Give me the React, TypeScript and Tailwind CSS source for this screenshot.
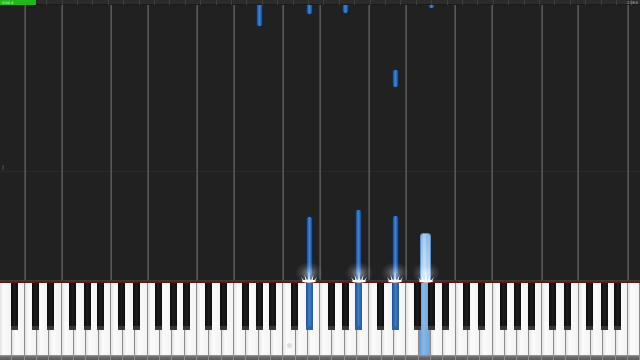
import React from "react";

const W = 640 / 52;
const LETTERS = ["A", "B", "C", "D", "E", "F", "G"];
const BLACK_OFF: Record<string, number> = { C: -1.1, D: 1.5, F: -1.1, G: 1, A: 2 };
const BK_W = 7;

const blackCenter = (whiteIdx: number) => {
  const l = LETTERS[whiteIdx % 7];
  return (whiteIdx + 1) * W + (BLACK_OFF[l] ?? 0);
};

const whiteKeys = Array.from({ length: 52 }, (_, i) => i);
const blackKeys = whiteKeys.filter((i) => i < 51 && BLACK_OFF[LETTERS[i % 7]] !== undefined);
const gridIdx = [2, 5, 9, 12, 16, 19, 23, 26, 30, 33, 37, 40, 44, 47, 51];

const pressedBlack = new Set([24, 28, 31]);
const pressedWhite = new Set([34]);

const blackNotes = [
  { k: 20, top: -8, h: 30 },
  { k: 24, top: -8, h: 18 },
  { k: 27, top: -8, h: 17 },
  { k: 34, top: -8, h: 12 },
  { k: 31, top: 64, h: 19 },
  { k: 24, top: 211, h: 80 },
  { k: 28, top: 204, h: 90 },
  { k: 31, top: 210, h: 90 },
];

const sparkX = [blackCenter(24), blackCenter(28), blackCenter(31), 425.5];

function Sparkle({ x }: { x: number }) {
  return (
    <div className="absolute top-[262px] w-[28px] h-[22px]" style={{ left: x - 14 }}>
      <div className="absolute inset-0 rounded-full bg-[radial-gradient(closest-side,rgba(255,255,255,0.45),rgba(190,215,245,0.15)_60%,transparent)]" />
      <svg width="28" height="22" viewBox="0 0 28 22" className="absolute inset-0">
        <g fill="#ffffff">
          <polygon points="14,10 15,19 13,19" />
          <polygon points="9.5,12.5 12.2,19 10.6,19.4" />
          <polygon points="18.5,12.5 17.4,19.4 15.8,19" />
          <polygon points="6,15 10,19.5 8.5,20" />
          <polygon points="22,15 19.5,20 18,19.5" />
          <ellipse cx="14" cy="19.2" rx="7" ry="1.6" />
        </g>
      </svg>
    </div>
  );
}

export default function App() {
  return (
    <div className="relative w-[640px] h-[360px] overflow-hidden flex flex-col bg-[#212121] font-['Liberation_Sans',sans-serif]">
      <div className="relative h-[5px] shrink-0 bg-[#2b2b2b] border-b border-[#1a1a1a]">
        {Array.from({ length: 41 }, (_, i) => (
          <div
            key={i}
            className="absolute top-0 h-[5px] w-px bg-[#3e3e3e]"
            style={{ left: Math.round((i + 1) * 15.4) }}
          />
        ))}
        <div className="absolute left-0 top-0 h-[5px] w-[36px] bg-[#22b51f] flex items-center pl-[2px]">
          <span className="text-[4px] leading-[4px] text-[#d8f5d8]">0:04.4</span>
        </div>
        <span className="absolute right-[2px] top-0 text-[4px] leading-[5px] text-[#bdbdbd]">-1:58.6</span>
      </div>

      <div className="relative flex-1 overflow-hidden">
        <div className="absolute left-0 right-0 top-[166px] h-px bg-[#292929]" />
        <div className="absolute left-[2px] top-[160px] w-[2px] h-[5px] bg-[#3a3a3a]" />
        {gridIdx.map((g) => (
          <div
            key={g}
            className="absolute top-0 bottom-0 w-[2px] bg-[linear-gradient(90deg,#3a3a3a,#5f5f5f)]"
            style={{ left: Math.round(g * W) - 1 }}
          />
        ))}
        {blackNotes.map((n, i) => (
          <div
            key={i}
            className="absolute rounded-[3px] border border-[#10294d] bg-[linear-gradient(90deg,#1d4b88,#3f86d8_45%,#2f6fbe_70%,#1a4480)]"
            style={{ left: blackCenter(n.k) - BK_W / 2, width: BK_W, top: n.top, height: n.h }}
          />
        ))}
        <div
          className="absolute rounded-[3px] border border-[#5b8fc6] bg-[linear-gradient(180deg,#8bbbe8,#b4d5f3_55%,#e4f1fd)]"
          style={{ left: 420, width: 11, top: 228, height: 70 }}
        >
          <div className="absolute inset-y-0 left-[2px] w-[3px] bg-[rgba(255,255,255,0.25)]" />
        </div>
      </div>

      <div className="h-px shrink-0 bg-[#3b3b3b]" />
      <div className="h-[2px] shrink-0 bg-[linear-gradient(180deg,#8d1616,#5a0d0d)]" />

      <div className="relative h-[77px] shrink-0 flex bg-[#6c6c6c]">
        {whiteKeys.map((i) => (
          <div key={i} className="relative flex-1 flex flex-col border-r border-[#8c8c8c]">
            {pressedWhite.has(i) ? (
              <div className="flex-1 bg-[linear-gradient(90deg,#5f98d2,#86b7e6_40%,#6fa5da)]" />
            ) : (
              <div className="flex-1 bg-[linear-gradient(90deg,#e2e2e2,#fbfbfb_30%,#f3f3f3)]" />
            )}
            <div className="h-[5px] bg-[linear-gradient(180deg,#9a9a9a,#6a6a6a_40%,#5c5c5c)]" />
          </div>
        ))}
        <div className="absolute left-[287px] top-[60px] w-[5px] h-[5px] rounded-full bg-[#dcdcdc]" />
        {blackKeys.map((i) => (
          <div
            key={i}
            className={
              "absolute top-0 h-[47px] rounded-b-[1px] flex flex-col " +
              (pressedBlack.has(i)
                ? "bg-[linear-gradient(90deg,#1f4f8e,#3a7cc9_50%,#24589a)]"
                : "bg-[linear-gradient(90deg,#0c0c0c,#1c1c1c_50%,#0e0e0e)]")
            }
            style={{ left: blackCenter(i) - BK_W / 2, width: BK_W }}
          >
            <div className="flex-1" />
            <div className={"h-[4px] " + (pressedBlack.has(i) ? "bg-[#2c64a8]" : "bg-[#363636]")} />
          </div>
        ))}
      </div>

      {sparkX.map((x, i) => (
        <Sparkle key={i} x={x} />
      ))}
    </div>
  );
}
